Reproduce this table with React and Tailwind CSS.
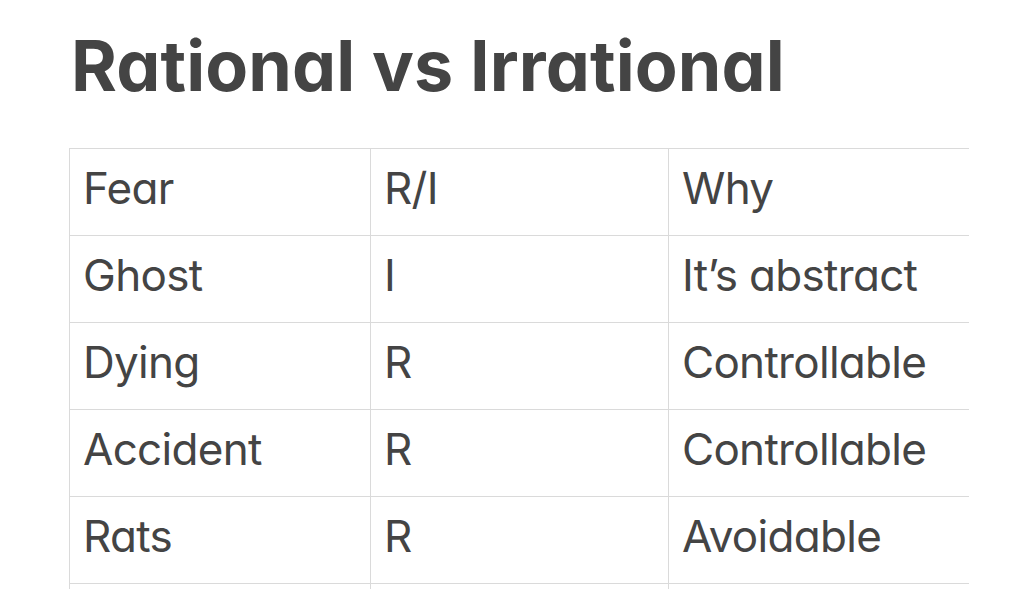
const rows = [
  ["Fear", "R/I", "Why"],
  ["Ghost", "I", "It’s abstract"],
  ["Dying", "R", "Controllable"],
  ["Accident", "R", "Controllable"],
  ["Rats", "R", "Avoidable"],
  ["", "", ""],
];

export default function App() {
  return (
    <div className="w-[1024px] h-[589px] overflow-hidden bg-white text-[#444444] font-['Inter',sans-serif] [font-feature-settings:'cv11']">
      <h1 className="ml-[71px] pt-[31px] text-[70px] leading-none font-bold tracking-[0.1px]">
        Rational vs Irrational
      </h1>
      <div className="ml-[69px] mt-[47px] w-[900px] grid grid-cols-[300px_298px_301px] border-l border-[#dadada]">
        {rows.map((row, i) =>
          row.map((cell, j) => (
            <div
              key={`${i}-${j}`}
              className={`h-[87px] border-t border-[#dadada] pl-[13px] pt-[17px] text-[44px] leading-none tracking-[-0.7px] ${
                j > 0 ? "border-l" : ""
              }`}
            >
              {cell}
            </div>
          ))
        )}
      </div>
    </div>
  );
}
